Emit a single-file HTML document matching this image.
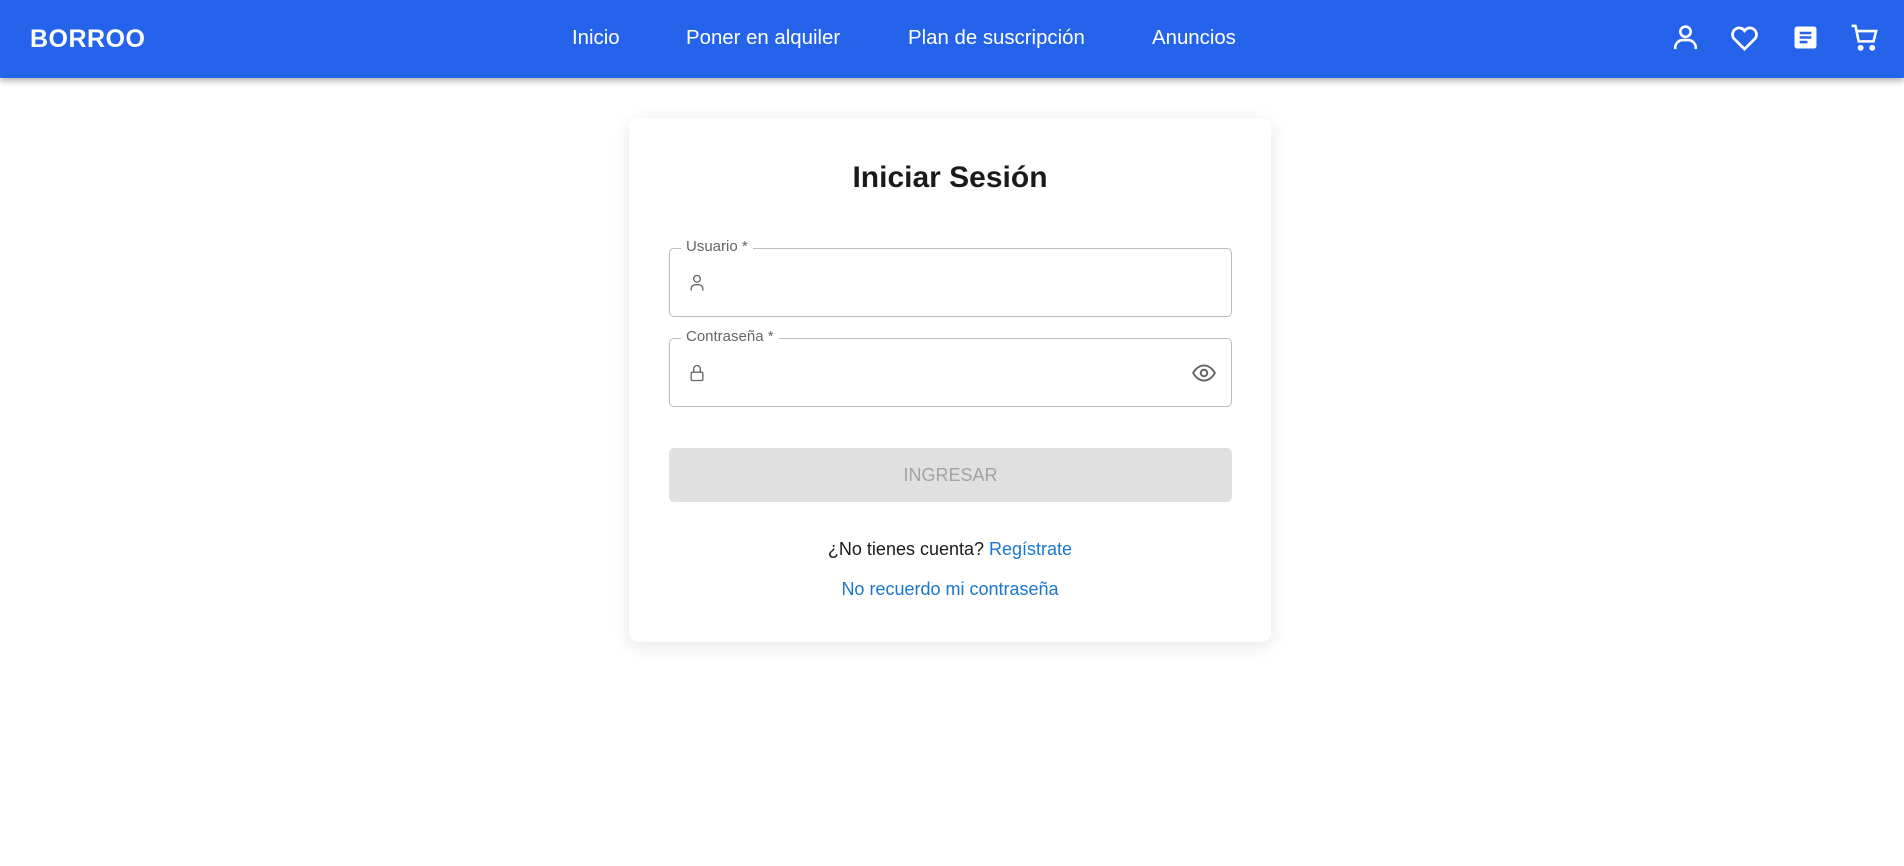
<!DOCTYPE html>
<html><head><meta charset="utf-8"><style>
*{box-sizing:border-box;margin:0;padding:0}
body{width:1904px;height:866px;background:#fff;font-family:"Liberation Sans",Arial,sans-serif;position:relative;overflow:hidden}
.nav{position:absolute;left:0;top:0;width:1904px;height:78px;background:#2563eb;box-shadow:0 3px 6px rgba(0,0,0,.3);color:#fff}
.logo{position:absolute;left:30px;top:25px;font-size:25px;font-weight:bold;letter-spacing:.5px}
.nav a{position:absolute;top:27px;font-size:20.4px;color:#fff;text-decoration:none}
.ic{position:absolute;top:22px;width:31px;height:31px}
.card{position:absolute;left:629px;top:118px;width:642px;height:524px;background:#fff;border-radius:10px;box-shadow:0 4px 18px rgba(0,0,0,.1)}
h1{position:absolute;top:43px;left:0;width:100%;text-align:center;font-size:30px;font-weight:bold;color:#1a1a1a}
.field{position:absolute;left:40px;width:563px;height:69px;border:1px solid #bdbdbd;border-radius:5px}
.field span{position:absolute;top:-11px;left:11px;background:#fff;padding:0 5px;font-size:15px;color:#666}
.field svg{position:absolute}
.btn{position:absolute;left:40px;top:330px;width:563px;height:54px;background:#e0e0e0;border-radius:5px;text-align:center;line-height:54px;font-size:18px;color:#a3a3a3}
.t{position:absolute;left:0;width:100%;text-align:center;font-size:18px;color:#1a1a1a}
.t a{color:#1976d2;text-decoration:none}
</style></head><body>
<div class="nav">
<div class="logo">BORROO</div>
<a style="left:572px">Inicio</a>
<a style="left:686px">Poner en alquiler</a>
<a style="left:908px">Plan de suscripción</a>
<a style="left:1152px">Anuncios</a>
<svg class="ic" style="left:1670px" viewBox="0 0 24 24" fill="none" stroke="#fff" stroke-width="2"><circle cx="12" cy="7.5" r="4"/><path d="M4 21v-1a6 6 0 0 1 6-6h4a6 6 0 0 1 6 6v1"/></svg>
<svg class="ic" style="left:1729px" viewBox="0 0 24 24" fill="none" stroke="#fff" stroke-width="2.1"><path d="M12 21l-8.3-8.3a5 5 0 0 1 8.3-6 5 5 0 0 1 8.3 6z"/></svg>
<svg class="ic" style="left:1790px" viewBox="0 0 24 24"><rect x="3.5" y="3.5" width="17" height="17" rx="2" fill="#fff"/><path d="M7.5 8.5h9M7.5 12h9M7.5 15.5h6" stroke="#2563eb" stroke-width="2"/></svg>
<svg class="ic" style="left:1849px" viewBox="0 0 24 24" fill="none" stroke="#fff" stroke-width="2"><path d="M2 3h3l2.5 12h11.5l2-8H6.5"/><circle cx="9" cy="20" r="1.3" fill="#fff"/><circle cx="18" cy="20" r="1.3" fill="#fff"/></svg>
</div>
<div class="card">
<h1>Iniciar Sesión</h1>
<div class="field" style="top:130px"><span>Usuario *</span>
<svg style="left:17px;top:24px" width="20" height="20" viewBox="0 0 24 24" fill="none" stroke="#666" stroke-width="1.6"><circle cx="12" cy="7" r="4"/><path d="M5 21v-2a5 5 0 0 1 5-5h4a5 5 0 0 1 5 5v2"/></svg></div>
<div class="field" style="top:220px"><span>Contraseña *</span>
<svg style="left:17px;top:24px" width="20" height="20" viewBox="0 0 24 24" fill="none" stroke="#666" stroke-width="1.6"><rect x="5" y="11" width="14" height="10" rx="1.5"/><path d="M8 11V7a4 4 0 0 1 8 0v4"/></svg>
<svg style="left:521px;top:21px" width="26" height="26" viewBox="0 0 24 24" fill="none" stroke="#666" stroke-width="1.8"><path d="M2 12s3.5-7 10-7 10 7 10 7-3.5 7-10 7S2 12 2 12z"/><circle cx="12" cy="12" r="3"/></svg></div>
<div class="btn">INGRESAR</div>
<div class="t" style="top:421px">¿No tienes cuenta? <a>Regístrate</a></div>
<div class="t" style="top:461px"><a>No recuerdo mi contraseña</a></div>
</div>
</body></html>
